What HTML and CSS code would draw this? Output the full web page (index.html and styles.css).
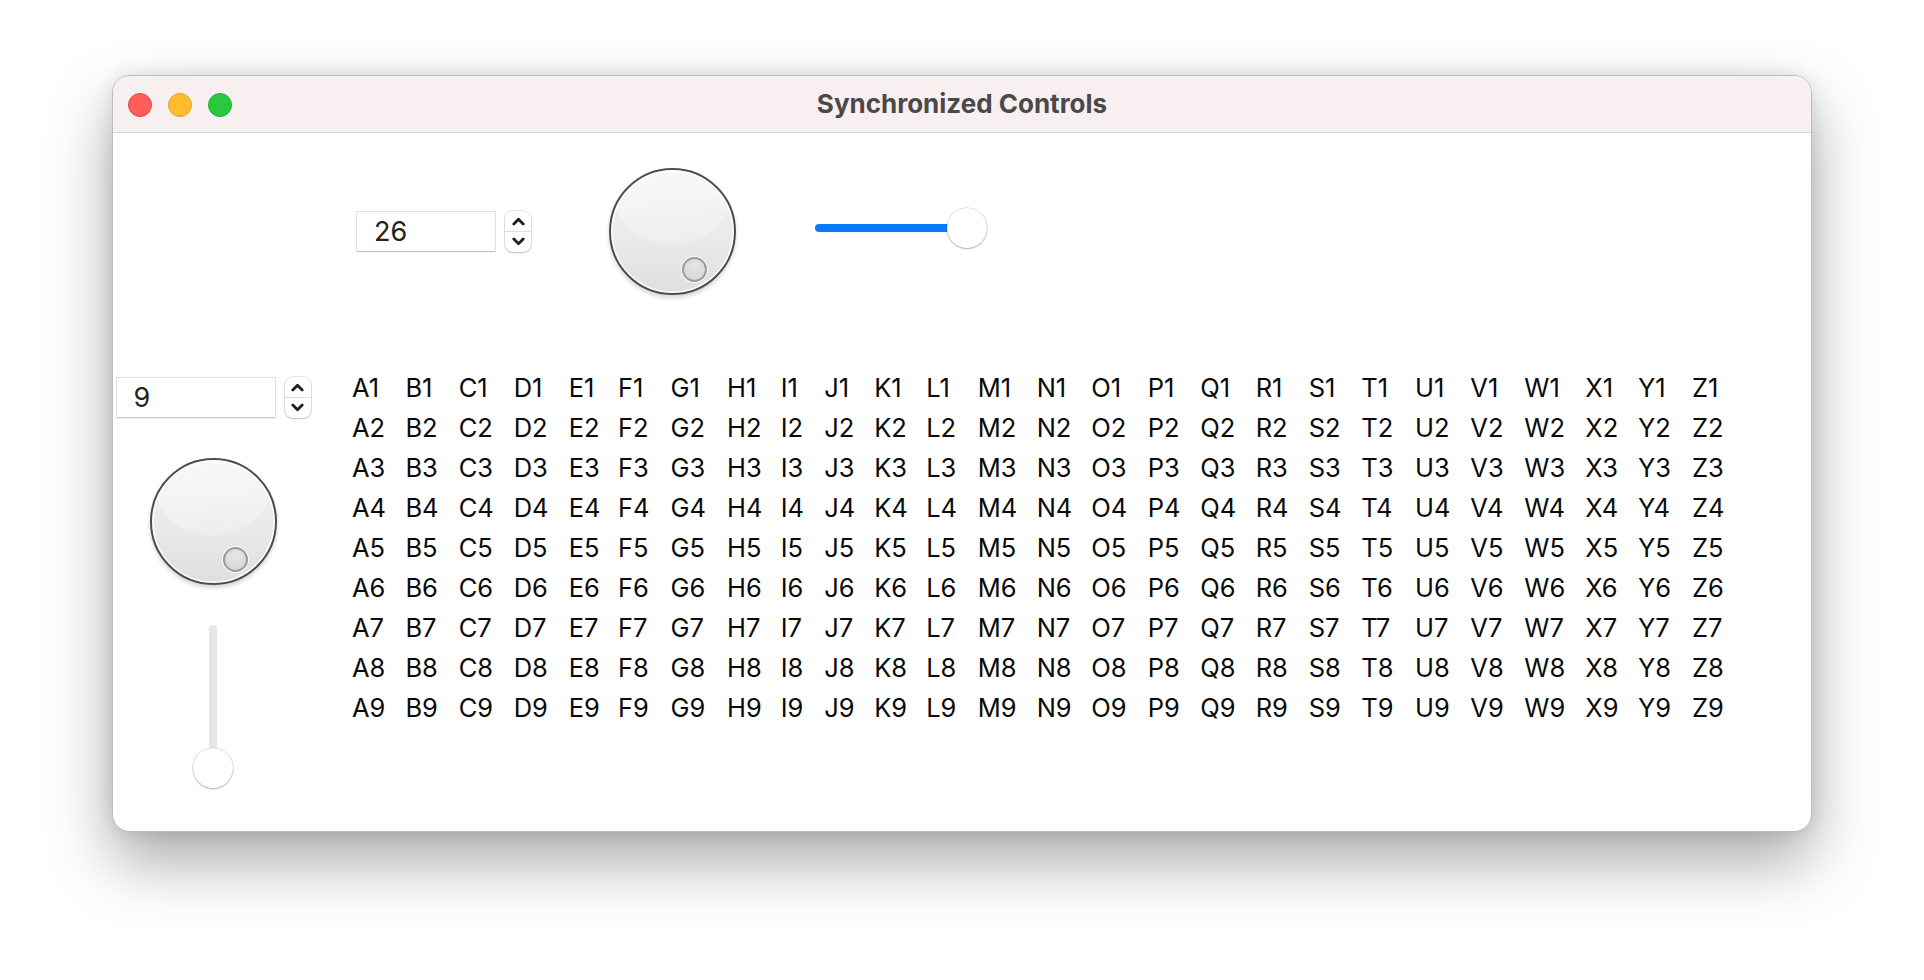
FILE: index.html
```html
<!DOCTYPE html>
<html>
<head>
<meta charset="utf-8">
<title>Synchronized Controls</title>
<link rel="stylesheet" href="styles.css">
</head>
<body>
<div class="stage">
  <div class="window">
    <header class="titlebar">
      <div class="lights">
        <span class="light red"></span>
        <span class="light yellow"></span>
        <span class="light green"></span>
      </div>
      <div class="title">Synchronized Controls</div>
      <div class="spacer"></div>
    </header>
    <main class="content">
      <div class="corner"></div>
      <div class="top-row">
        <div class="field-group">
          <div class="numfield short">26</div>
          <div class="stepper">
            <span class="step up"><svg width="13" height="9" viewBox="0 0 13 9"><polyline points="1.8,7 6.5,2.3 11.2,7" /></svg></span>
            <span class="step down"><svg width="13" height="9" viewBox="0 0 13 9"><polyline points="1.8,2 6.5,6.7 11.2,2" /></svg></span>
          </div>
        </div>
        <div class="knob"><span class="knob-dot"></span></div>
        <div class="hslider">
          <div class="hslider-track"></div>
          <div class="thumb"></div>
        </div>
      </div>
      <div class="side-col">
        <div class="field-group">
          <div class="numfield long">9</div>
          <div class="stepper">
            <span class="step up"><svg width="13" height="9" viewBox="0 0 13 9"><polyline points="1.8,7 6.5,2.3 11.2,7" /></svg></span>
            <span class="step down"><svg width="13" height="9" viewBox="0 0 13 9"><polyline points="1.8,2 6.5,6.7 11.2,2" /></svg></span>
          </div>
        </div>
        <div class="knob side-knob"><span class="knob-dot"></span></div>
        <div class="vslider">
          <div class="vslider-track"></div>
          <div class="thumb"></div>
        </div>
      </div>
      <div class="labels">
        <span>A1</span><span>B1</span><span>C1</span><span>D1</span><span>E1</span><span>F1</span><span>G1</span><span>H1</span><span>I1</span><span>J1</span><span>K1</span><span>L1</span><span>M1</span><span>N1</span><span>O1</span><span>P1</span><span>Q1</span><span>R1</span><span>S1</span><span>T1</span><span>U1</span><span>V1</span><span>W1</span><span>X1</span><span>Y1</span><span>Z1</span>
        <span>A2</span><span>B2</span><span>C2</span><span>D2</span><span>E2</span><span>F2</span><span>G2</span><span>H2</span><span>I2</span><span>J2</span><span>K2</span><span>L2</span><span>M2</span><span>N2</span><span>O2</span><span>P2</span><span>Q2</span><span>R2</span><span>S2</span><span>T2</span><span>U2</span><span>V2</span><span>W2</span><span>X2</span><span>Y2</span><span>Z2</span>
        <span>A3</span><span>B3</span><span>C3</span><span>D3</span><span>E3</span><span>F3</span><span>G3</span><span>H3</span><span>I3</span><span>J3</span><span>K3</span><span>L3</span><span>M3</span><span>N3</span><span>O3</span><span>P3</span><span>Q3</span><span>R3</span><span>S3</span><span>T3</span><span>U3</span><span>V3</span><span>W3</span><span>X3</span><span>Y3</span><span>Z3</span>
        <span>A4</span><span>B4</span><span>C4</span><span>D4</span><span>E4</span><span>F4</span><span>G4</span><span>H4</span><span>I4</span><span>J4</span><span>K4</span><span>L4</span><span>M4</span><span>N4</span><span>O4</span><span>P4</span><span>Q4</span><span>R4</span><span>S4</span><span>T4</span><span>U4</span><span>V4</span><span>W4</span><span>X4</span><span>Y4</span><span>Z4</span>
        <span>A5</span><span>B5</span><span>C5</span><span>D5</span><span>E5</span><span>F5</span><span>G5</span><span>H5</span><span>I5</span><span>J5</span><span>K5</span><span>L5</span><span>M5</span><span>N5</span><span>O5</span><span>P5</span><span>Q5</span><span>R5</span><span>S5</span><span>T5</span><span>U5</span><span>V5</span><span>W5</span><span>X5</span><span>Y5</span><span>Z5</span>
        <span>A6</span><span>B6</span><span>C6</span><span>D6</span><span>E6</span><span>F6</span><span>G6</span><span>H6</span><span>I6</span><span>J6</span><span>K6</span><span>L6</span><span>M6</span><span>N6</span><span>O6</span><span>P6</span><span>Q6</span><span>R6</span><span>S6</span><span>T6</span><span>U6</span><span>V6</span><span>W6</span><span>X6</span><span>Y6</span><span>Z6</span>
        <span>A7</span><span>B7</span><span>C7</span><span>D7</span><span>E7</span><span>F7</span><span>G7</span><span>H7</span><span>I7</span><span>J7</span><span>K7</span><span>L7</span><span>M7</span><span>N7</span><span>O7</span><span>P7</span><span>Q7</span><span>R7</span><span>S7</span><span>T7</span><span>U7</span><span>V7</span><span>W7</span><span>X7</span><span>Y7</span><span>Z7</span>
        <span>A8</span><span>B8</span><span>C8</span><span>D8</span><span>E8</span><span>F8</span><span>G8</span><span>H8</span><span>I8</span><span>J8</span><span>K8</span><span>L8</span><span>M8</span><span>N8</span><span>O8</span><span>P8</span><span>Q8</span><span>R8</span><span>S8</span><span>T8</span><span>U8</span><span>V8</span><span>W8</span><span>X8</span><span>Y8</span><span>Z8</span>
        <span>A9</span><span>B9</span><span>C9</span><span>D9</span><span>E9</span><span>F9</span><span>G9</span><span>H9</span><span>I9</span><span>J9</span><span>K9</span><span>L9</span><span>M9</span><span>N9</span><span>O9</span><span>P9</span><span>Q9</span><span>R9</span><span>S9</span><span>T9</span><span>U9</span><span>V9</span><span>W9</span><span>X9</span><span>Y9</span><span>Z9</span>
      </div>
    </main>
  </div>
</div>
</body>
</html>
```

FILE: styles.css
```css
html, body {
  margin: 0;
  padding: 0;
  background: #ffffff;
}

body {
  font-family: Inter, "Noto Sans", "Liberation Sans", sans-serif;
  color: #000;
  min-height: 980px;
}

.stage {
  padding: 75px 0 148px 112px;
}

.window {
  width: 1700px;
  height: 757px;
  box-sizing: border-box;
  border: 1px solid #bdbdbd;
  border-radius: 18px;
  overflow: hidden;
  background: #ffffff;
  box-shadow: 0 30px 64px rgba(0, 0, 0, 0.34), 0 0 18px rgba(0, 0, 0, 0.10);
  display: flex;
  flex-direction: column;
}

/* ---------- title bar ---------- */
.titlebar {
  height: 56px;
  flex: none;
  background: #f8eff0;
  border-bottom: 1px solid #ddd6d7;
  display: grid;
  grid-template-columns: 1fr auto 1fr;
  align-items: center;
}

.lights {
  display: flex;
  gap: 16px;
  padding-left: 15px;
  padding-top: 1px;
}

.light {
  width: 24px;
  height: 24px;
  box-sizing: border-box;
  border-radius: 50%;
  border: 1px solid transparent;
}

.light.red { background: #ff5f57; border-color: #e2463f; }
.light.yellow { background: #febc2e; border-color: #e0a125; }
.light.green { background: #28c840; border-color: #1cad2c; }

.title {
  font-size: 26px;
  font-weight: 700;
  color: #4b4849;
  letter-spacing: 0;
  padding-bottom: 2px;
}

/* ---------- content ---------- */
.content {
  flex: 1;
  display: grid;
  grid-template-columns: 200px 1fr;
  grid-template-rows: auto 1fr;
}

.top-row {
  display: flex;
  align-items: center;
  padding: 35px 0 0 43px;
}

.top-row .knob {
  margin-left: 78px;
}

.top-row .hslider {
  margin-left: 79px;
  margin-bottom: 8px;
}

.field-group {
  display: flex;
  align-items: center;
  gap: 9px;
}

.numfield {
  height: 41px;
  box-sizing: border-box;
  border: 1px solid #e1e1e1;
  border-bottom-color: #c9c9c9;
  box-shadow: 0 1px 0 rgba(0, 0, 0, 0.04);
  background: #fff;
  font-size: 27px;
  color: #222;
  display: flex;
  align-items: center;
  padding-left: 17px;
  padding-bottom: 1px;
}

.numfield.short { width: 140px; }
.numfield.long { width: 160px; }

.stepper {
  width: 26px;
  height: 41px;
  box-sizing: border-box;
  border-radius: 8px;
  background: #fff;
  box-shadow: 0 0 0 1px rgba(0, 0, 0, 0.09), 0 1px 2px rgba(0, 0, 0, 0.18);
  display: flex;
  flex-direction: column;
  overflow: hidden;
}

.step {
  flex: 1;
  display: flex;
  align-items: center;
  justify-content: center;
}

.step.up {
  border-bottom: 1px solid #dedede;
  padding-top: 1px;
}

.step.down {
  padding-bottom: 1px;
}

.step svg polyline {
  fill: none;
  stroke: #1f1f1f;
  stroke-width: 2.8;
  stroke-linecap: round;
  stroke-linejoin: round;
}

/* ---------- knob ---------- */
.knob {
  width: 127px;
  height: 127px;
  box-sizing: border-box;
  border-radius: 50%;
  border: 2px solid #4d4d4d;
  background: linear-gradient(180deg, #f2f2f2 0%, #e9e9e9 60%, #dedede 100%);
  box-shadow: inset 0 0 0 1.5px #ffffff, 0 3px 4px rgba(0, 0, 0, 0.16);
  position: relative;
  overflow: hidden;
  flex: none;
}

.knob::before {
  content: "";
  position: absolute;
  left: 3px;
  top: -30px;
  width: 119px;
  height: 105px;
  border-radius: 50%;
  background: linear-gradient(180deg, rgba(255, 255, 255, 0.6), rgba(255, 255, 255, 0.2));
  transform: rotate(-12deg);
}

.knob-dot {
  position: absolute;
  left: 71px;
  top: 87px;
  width: 25px;
  height: 25px;
  box-sizing: border-box;
  border-radius: 50%;
  border: 2px solid #9b9b9b;
  background: radial-gradient(circle at 50% 35%, #e6e6e6 0%, #d3d3d3 100%);
  box-shadow: 0 0 0 1px rgba(255, 255, 255, 0.9);
}

/* ---------- sliders ---------- */
.thumb {
  width: 40px;
  height: 40px;
  border-radius: 50%;
  background: #ffffff;
  box-shadow: 0 0 0 0.5px rgba(0, 0, 0, 0.18), 0 1px 2px rgba(0, 0, 0, 0.25);
  position: relative;
  flex: none;
}

.hslider {
  width: 172px;
  height: 40px;
  display: flex;
  align-items: center;
}

.hslider-track {
  flex: 1;
  height: 8px;
  border-radius: 4px;
  background: #0a7aff;
  margin-right: -20px;
}

.side-col {
  display: flex;
  flex-direction: column;
  align-items: center;
}

.side-col .field-group {
  margin-top: 82px;
}

.side-knob {
  margin-top: 40px;
}

.vslider {
  margin-top: 40px;
  width: 40px;
  height: 163px;
  display: flex;
  flex-direction: column;
  align-items: center;
}

.vslider-track {
  flex: 1;
  width: 8px;
  border-radius: 4px;
  background: #e6e6e6;
  margin-bottom: -20px;
}

/* ---------- label grid ---------- */
.labels {
  display: grid;
  grid-template-columns:
    53.4px 53.3px 55px 55px 49.3px 52.4px 56.6px 53.7px 43.5px 50px
    52px 51.5px 59px 54.5px 56.5px 52.5px 55.5px 53px 52.7px 53.7px
    55.3px 54px 61px 52.6px 54px auto;
  grid-auto-rows: 40px;
  align-content: start;
  margin-top: 73px;
  padding-left: 39px;
  font-size: 25.5px;
  line-height: 40px;
  color: #0a0a0a;
}

.labels span {
  white-space: nowrap;
}
```
